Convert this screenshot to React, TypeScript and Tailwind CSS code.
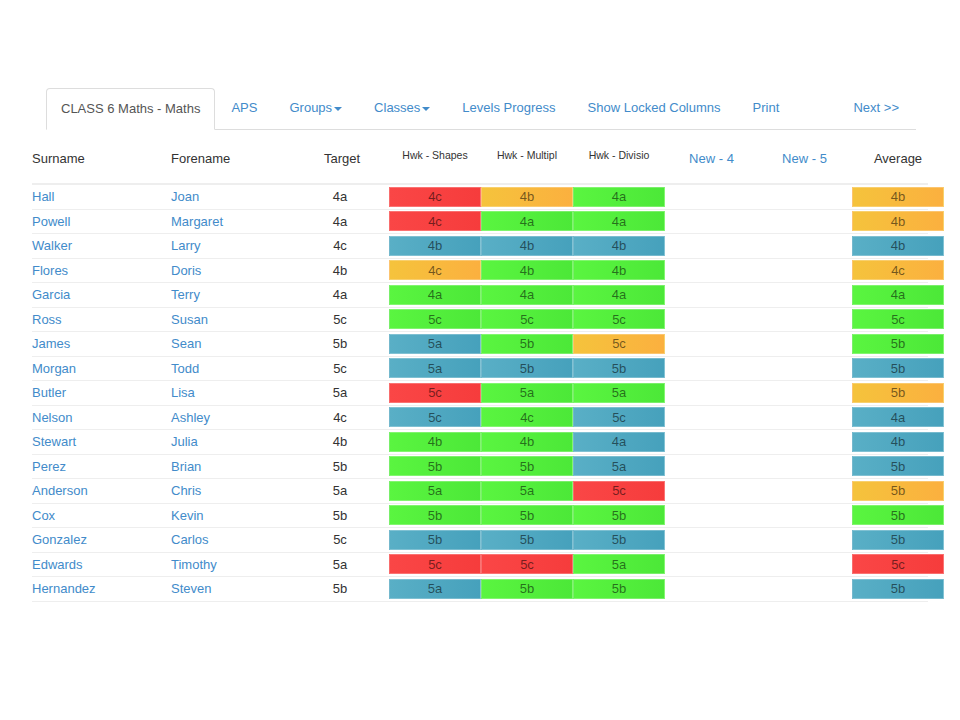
type Level = "r" | "o" | "g" | "b";
type Mark = [string, Level];

const colour: Record<Level, string> = {
	r: "bg-linear-to-r from-[#fa4646] to-[#f63c3c]",
	o: "bg-linear-to-r from-[#f5c33c] to-[#fbb03f]",
	g: "bg-linear-to-r from-[#5af540] to-[#4ce838]",
	b: "bg-linear-to-r from-[#59afc6] to-[#46a1bc]",
};

const pupils: { surname: string; forename: string; target: string; marks: Mark[]; avg: Mark }[] = [
	{ surname: "Hall", forename: "Joan", target: "4a", marks: [["4c", "r"], ["4b", "o"], ["4a", "g"]], avg: ["4b", "o"] },
	{ surname: "Powell", forename: "Margaret", target: "4a", marks: [["4c", "r"], ["4a", "g"], ["4a", "g"]], avg: ["4b", "o"] },
	{ surname: "Walker", forename: "Larry", target: "4c", marks: [["4b", "b"], ["4b", "b"], ["4b", "b"]], avg: ["4b", "b"] },
	{ surname: "Flores", forename: "Doris", target: "4b", marks: [["4c", "o"], ["4b", "g"], ["4b", "g"]], avg: ["4c", "o"] },
	{ surname: "Garcia", forename: "Terry", target: "4a", marks: [["4a", "g"], ["4a", "g"], ["4a", "g"]], avg: ["4a", "g"] },
	{ surname: "Ross", forename: "Susan", target: "5c", marks: [["5c", "g"], ["5c", "g"], ["5c", "g"]], avg: ["5c", "g"] },
	{ surname: "James", forename: "Sean", target: "5b", marks: [["5a", "b"], ["5b", "g"], ["5c", "o"]], avg: ["5b", "g"] },
	{ surname: "Morgan", forename: "Todd", target: "5c", marks: [["5a", "b"], ["5b", "b"], ["5b", "b"]], avg: ["5b", "b"] },
	{ surname: "Butler", forename: "Lisa", target: "5a", marks: [["5c", "r"], ["5a", "g"], ["5a", "g"]], avg: ["5b", "o"] },
	{ surname: "Nelson", forename: "Ashley", target: "4c", marks: [["5c", "b"], ["4c", "g"], ["5c", "b"]], avg: ["4a", "b"] },
	{ surname: "Stewart", forename: "Julia", target: "4b", marks: [["4b", "g"], ["4b", "g"], ["4a", "b"]], avg: ["4b", "b"] },
	{ surname: "Perez", forename: "Brian", target: "5b", marks: [["5b", "g"], ["5b", "g"], ["5a", "b"]], avg: ["5b", "b"] },
	{ surname: "Anderson", forename: "Chris", target: "5a", marks: [["5a", "g"], ["5a", "g"], ["5c", "r"]], avg: ["5b", "o"] },
	{ surname: "Cox", forename: "Kevin", target: "5b", marks: [["5b", "g"], ["5b", "g"], ["5b", "g"]], avg: ["5b", "g"] },
	{ surname: "Gonzalez", forename: "Carlos", target: "5c", marks: [["5b", "b"], ["5b", "b"], ["5b", "b"]], avg: ["5b", "b"] },
	{ surname: "Edwards", forename: "Timothy", target: "5a", marks: [["5c", "r"], ["5c", "r"], ["5a", "g"]], avg: ["5c", "r"] },
	{ surname: "Hernandez", forename: "Steven", target: "5b", marks: [["5a", "b"], ["5b", "g"], ["5b", "g"]], avg: ["5b", "b"] },
];

function Caret() {
	return <span className="inline-block w-0 h-0 ml-0.5 align-middle border-x-4 border-t-4 border-x-transparent border-t-current" />;
}

function Cell({ mark }: { mark: Mark }) {
	return (
		<div className={`w-[92px] h-5 shrink-0 flex items-center justify-center border border-white/25 text-black/55 ${colour[mark[1]]}`}>
			{mark[0]}
		</div>
	);
}

function App() {
	const tab = "block shrink-0 whitespace-nowrap px-[15px] py-[10px] leading-5 mr-[2px] -mb-px text-[#428bca]";
	return (
		<div className="min-h-[720px] bg-white text-[13px] text-[#333]" style={{ fontFamily: '"Liberation Sans", Arial, sans-serif' }}>
			<div className="pt-[88px] pl-[46px]">
				<ul className="w-[870px] flex border-b border-[#ddd]">
					<li className="block shrink-0 whitespace-nowrap px-[14px] py-[10px] leading-5 mr-px -mb-px text-[#555] bg-white border border-[#ddd] border-b-transparent rounded-t">
						CLASS 6 Maths - Maths
					</li>
					<li className={tab}>APS</li>
					<li className={tab}>Groups<Caret /></li>
					<li className={tab}>Classes<Caret /></li>
					<li className={tab}>Levels Progress</li>
					<li className={tab}>Show Locked Columns</li>
					<li className={tab}>Print</li>
					<li className={`${tab} ml-auto`}>Next &gt;&gt;</li>
				</ul>
			</div>

			<div className="ml-[32px] mt-[5px] w-[896px]">
				<div className="flex items-center h-[50px] border-b-2 border-[#eee]">
					<div className="w-[139px] shrink-0">Surname</div>
					<div className="w-[129px] shrink-0">Forename</div>
					<div className="w-[80px] shrink-0 text-center pl-1">Target</div>
					<div className="w-[9px] shrink-0" />
					<div className="w-[92px] shrink-0 text-center text-[10.5px] pb-[6px]">Hwk - Shapes</div>
					<div className="w-[92px] shrink-0 text-center text-[10.5px] pb-[6px]">Hwk - Multipl</div>
					<div className="w-[92px] shrink-0 text-center text-[10.5px] pb-[6px]">Hwk - Divisio</div>
					<div className="w-[93px] shrink-0 text-center text-[#428bca]">New - 4</div>
					<div className="w-[93px] shrink-0 text-center text-[#428bca]">New - 5</div>
					<div className="w-[92px] shrink-0 ml-px text-center">Average</div>
				</div>
				{pupils.map((p) => (
					<div key={p.surname} className="flex items-center h-[24.5px] border-b border-[#eee]">
						<div className="w-[139px] shrink-0 text-[#428bca]">{p.surname}</div>
						<div className="w-[129px] shrink-0 text-[#428bca]">{p.forename}</div>
						<div className="w-[80px] shrink-0 text-center">{p.target}</div>
						<div className="w-[9px] shrink-0" />
						{p.marks.map((m, i) => (
							<Cell key={i} mark={m} />
						))}
						<div className="w-[93px] shrink-0" />
						<div className="w-[93px] shrink-0" />
						<div className="ml-px shrink-0">
							<Cell mark={p.avg} />
						</div>
					</div>
				))}
			</div>
		</div>
	);
}

export default App;
